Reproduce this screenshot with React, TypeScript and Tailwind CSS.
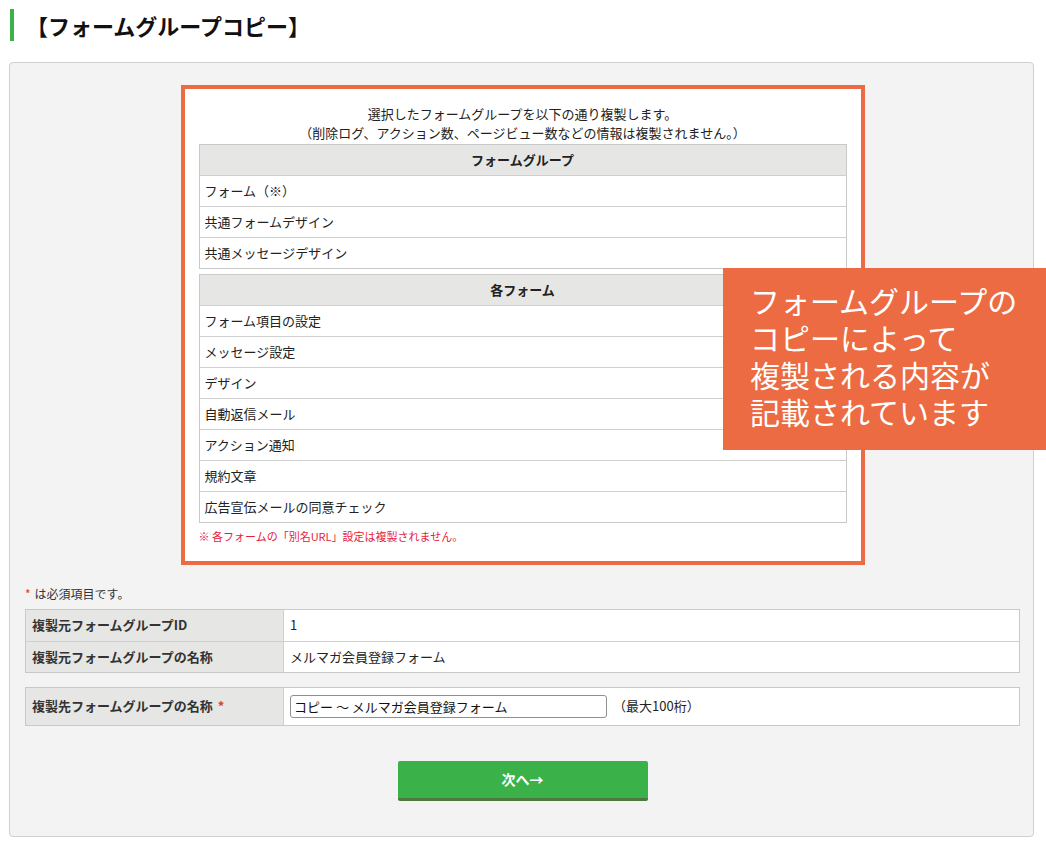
import React from 'react';

const groupItems = ['フォーム（※）', '共通フォームデザイン', '共通メッセージデザイン'];
const formItems = [
  'フォーム項目の設定',
  'メッセージ設定',
  'デザイン',
  '自動返信メール',
  'アクション通知',
  '規約文章',
  '広告宣伝メールの同意チェック',
];

const font = { fontFamily: '"Noto Sans CJK JP", "Noto Sans", sans-serif' };

const ListTable: React.FC<{ title: string; items: string[] }> = ({ title, items }) => (
  <div className="border border-[#c9c9c9] bg-white">
    <div className="h-[30px] bg-[#e6e7e4] flex items-center justify-center text-[13px] font-bold text-[#222]">
      {title}
    </div>
    {items.map((item) => (
      <div key={item} className="h-[31px] border-t border-[#cfcfcf] flex items-center px-[5px] text-[13px] text-[#222]">
        {item}
      </div>
    ))}
  </div>
);

const InfoRow: React.FC<{ label: React.ReactNode; children: React.ReactNode; tall?: boolean; first?: boolean }> = ({
  label,
  children,
  tall,
  first,
}) => (
  <div className={`flex ${tall ? 'h-[37px]' : 'h-[31px]'} ${first ? '' : 'border-t border-[#cfcfcf]'}`}>
    <div className="w-[258px] shrink-0 bg-[#e6e7e4] border-r border-[#cfcfcf] flex items-center px-[6px] text-[13px] font-bold text-[#333]">
      {label}
    </div>
    <div className="flex-1 bg-white flex items-center px-[6px] text-[13px] text-[#222]">{children}</div>
  </div>
);

export default function App() {
  return (
    <div className="w-[1046px] h-[845px] bg-white overflow-hidden" style={font}>
      <div className="pt-[9px] pl-[10px]">
        <div className="h-[32px] border-l-4 border-[#3bb149] pl-[12px] flex items-center text-[22px] font-bold text-[#111]">
          【フォームグループコピー】
        </div>
      </div>

      <div className="relative mt-[21px] ml-[9px] mr-[12px] h-[775px] bg-[#f3f3f3] border border-[#cfcfcf] rounded-[4px] pl-[15px] pr-[13px]">
        <div className="mx-auto mt-[22px] w-[684px] border-4 border-[#ec6b43] bg-white px-[14px] pt-[15px] pb-[16px]">
          <div className="text-center text-[13px] leading-[19px] text-[#222]">
            <p>選択したフォームグループを以下の通り複製します。</p>
            <p>（削除ログ、アクション数、ページビュー数などの情報は複製されません。）</p>
          </div>
          <div className="mt-[2px]">
            <ListTable title="フォームグループ" items={groupItems} />
          </div>
          <div className="mt-[5px]">
            <ListTable title="各フォーム" items={formItems} />
          </div>
          <p className="mt-[5px] text-[11px] text-[#e8203a]">※ 各フォームの「別名URL」設定は複製されません。</p>
        </div>

        <p className="mt-[20px] text-[12px] text-[#333]">
          <span className="text-[#d9412a] mr-[4px]">*</span>は必須項目です。
        </p>
        <div className="mt-[6px] border border-[#c9c9c9]">
          <InfoRow label="複製元フォームグループID" first>
            1
          </InfoRow>
          <InfoRow label="複製元フォームグループの名称">メルマガ会員登録フォーム</InfoRow>
        </div>

        <div className="mt-[14px] border border-[#c9c9c9]">
          <InfoRow
            first
            tall
            label={
              <>
                複製先フォームグループの名称<span className="text-[#d9412a] ml-[5px]">*</span>
              </>
            }
          >
            <input
              className="w-[317px] h-[23px] border border-[#8f8f8f] rounded-[3px] px-[3px] text-[13px] text-[#111] outline-none"
              style={font}
              defaultValue="コピー ～ メルマガ会員登録フォーム"
            />
            <span className="ml-[6px]">（最大100桁）</span>
          </InfoRow>
        </div>

        <div className="mt-[35px] flex justify-center">
          <button className="w-[250px] h-[40px] bg-[#3bb149] border-b-[3px] border-[#4b7a3e] rounded-[2px] text-white text-[14px] font-bold">
            次へ→
          </button>
        </div>

        <div className="absolute left-[713px] top-[205px] w-[323px] h-[182px] bg-[#ec6b43] text-white text-[30px] leading-[37px] pl-[27px] pt-[14px]">
          <p>フォームグループの</p>
          <p>コピーによって</p>
          <p>複製される内容が</p>
          <p>記載されています</p>
        </div>
      </div>
    </div>
  );
}
